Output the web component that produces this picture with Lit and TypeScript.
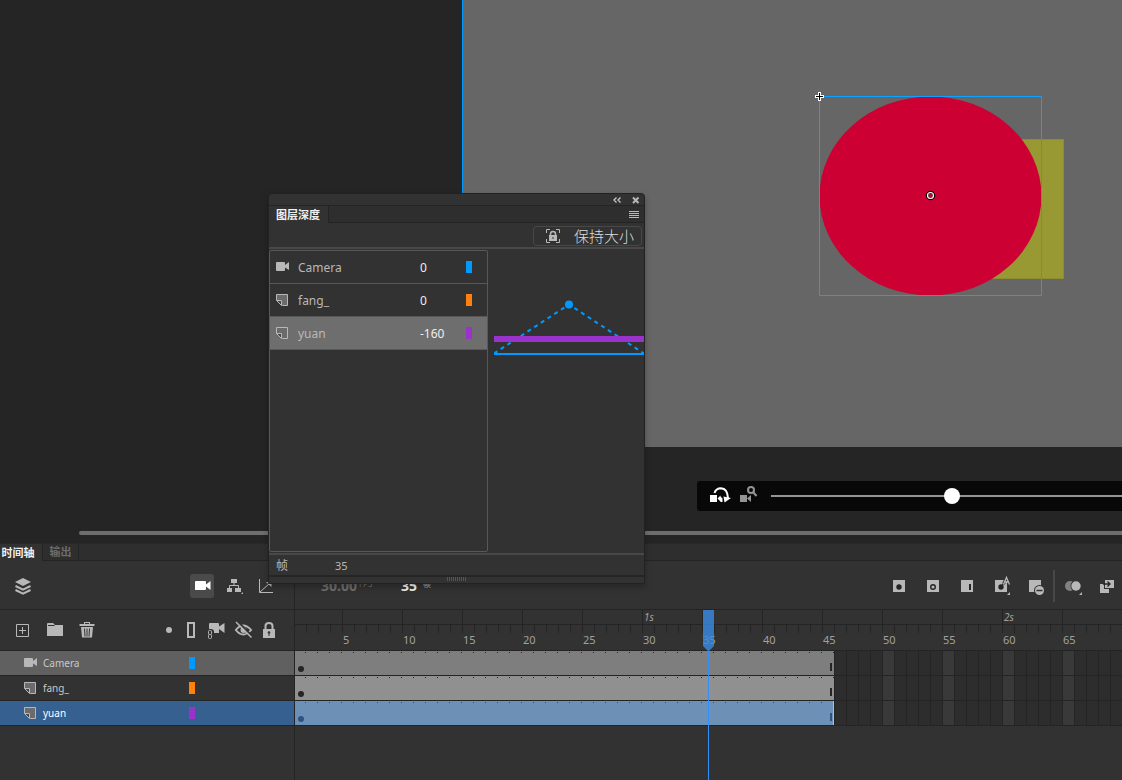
import { LitElement, html, css, svg, nothing } from "lit";
import { customElement, property, state } from "lit/decorators.js";

interface Layer {
  name: string;
  kind: "camera" | "layer";
  depth: number;
  color: string;
  tone: "cam" | "plain" | "active";
}

const LAYERS: Layer[] = [
  { name: "Camera", kind: "camera", depth: 0, color: "#0099ff", tone: "cam" },
  { name: "fang_", kind: "layer", depth: 0, color: "#ff800d", tone: "plain" },
  { name: "yuan", kind: "layer", depth: -160, color: "#9933cc", tone: "active" },
];

const G = "#b8b8b8";

const glyphs: Record<string, unknown> = {
  layers: svg`<path fill=${G} d="M12 4l8 4-8 4-8-4z"/>
    <path fill="none" stroke=${G} stroke-width="2" d="M4.500 12l7.500 3.700 7.500-3.700M4.500 16l7.500 3.700 7.500-3.700"/>`,
  camera: svg`<path fill="#fff" d="M6 7h9q1 0 1 1v2.500l4.500-3.500v9l-4.500-3.500v2.500q0 1-1 1H5.500q-.5 0-.5-.5V8q0-1 1-1z"/>`,
  tree: svg`<path fill=${G} d="M9 5h6v4H9zM5 14h5v4H5zM13 14h6v4h-6zM21 18v2h-2z"/>
    <path fill="none" stroke=${G} d="M12 9v3M7.500 14v-2.500h9V14"/>`,
  graph: svg`<path fill="none" stroke=${G} d="M5.500 5v13.500H19M6 18l9.500-8.500"/>
    <path fill=${G} d="M12 8h5.500v5z"/>`,
  add: svg`<path fill="none" stroke=${G} d="M5.500 6.500h12v12h-12zM11.500 9v7M8 12.500h7"/>`,
  folder: svg`<path fill=${G} d="M4 6q0-1 1-1h5l2 2h8v11H4z"/><path stroke="#323232" stroke-width="1" d="M5 7.500h6.500"/>`,
  trash: svg`<path fill=${G} d="M9 4h6v2h4.500v2h-15V6H9zM6 9h12l-1 10.500H7z"/>
    <path stroke="#323232" d="M9.500 10.500l.5 8M12 10.500v8M14.500 10.500l-.5 8M10 5.500h4"/>`,
  dot: svg`<circle cx="12" cy="12" r="3" fill=${G}/>`,
  outline: svg`<path fill="none" stroke=${G} stroke-width="2" d="M6 5h6v14H6z"/>`,
  camlink: svg`<path fill=${G} d="M2 6q0-1 1-1h8q1 0 1 1v2.500L17.500 5v10L12 11v4H7v-2H2z"/>
    <g fill="none" stroke="#323232" stroke-width="3"><rect x="1.500" y="12.500" width="4" height="8" rx="1.500"/></g>
    <g fill="none" stroke=${G}><rect x="1.500" y="12.500" width="3" height="4" rx="1"/><rect x="1.500" y="16.500" width="3" height="4" rx="1"/></g>`,
  eye: svg`<path fill="none" stroke=${G} stroke-width="1.800" d="M3.800 12Q11 3 19.200 12Q11 21 3.800 12z"/>
    <circle cx="11.500" cy="12" r="3" fill=${G}/><path stroke="#323232" stroke-width="2" d="M5.500 3.500L20 18"/>
    <path stroke=${G} stroke-width="1.500" d="M4 4l15.500 15.500"/>`,
  lock: svg`<path fill="none" stroke=${G} stroke-width="2" d="M8.500 11V8q0-3 3.500-3t3.500 3v3"/>
    <path fill=${G} d="M6 11h12v9H6z"/><circle cx="12" cy="14.500" r="1.300" fill="#323232"/><path stroke="#323232" d="M12 15v3"/>`,
  key: svg`<path fill=${G} d="M6 6h12v12H6z"/><circle cx="12" cy="13" r="2.700" fill="#252525"/>`,
  blank: svg`<path fill=${G} d="M6 6h12v12H6z"/><circle cx="12" cy="13" r="2.300" fill="none" stroke="#252525" stroke-width="1.400"/>`,
  frame: svg`<path fill=${G} d="M6 6h12v12H6z"/><path fill="#252525" d="M14 10h2v6h-2z"/>`,
  auto: svg`<path fill=${G} d="M6 6h12v12H6z"/><circle cx="12" cy="13" r="2.700" fill="#252525"/>
    <path stroke="#252525" stroke-width="1.300" d="M12 13l4-5"/>
    <path fill="none" stroke="#323232" stroke-width="3" d="M14.500 10l3-6 3 6"/>
    <path fill="none" stroke=${G} stroke-width="1.300" d="M14.500 10.500l3-7 3 7M15.500 8h4"/><path fill=${G} d="M21 18v3h-3z"/>`,
  remove: svg`<path fill=${G} d="M6 6h12v12H6z"/><circle cx="16.500" cy="16.500" r="5.500" fill="#323232"/>
    <circle cx="16.500" cy="16.500" r="4.500" fill=${G}/><path stroke="#323232" stroke-width="1.500" d="M13.500 16.500h6"/>`,
  onion: svg`<circle cx="9" cy="12" r="5" fill="#828282"/><circle cx="15" cy="12" r="5.500" fill="#323232"/>
    <circle cx="15" cy="12" r="4.700" fill=${G}/><path fill=${G} d="M21 18v3h-3z"/>`,
  merge: svg`<path fill=${G} d="M5 10h9v9H5z"/><path fill="#323232" d="M9 5h11v10H9z"/><path fill=${G} d="M10 6h9v8h-9z"/>
    <path fill="none" stroke="#252525" stroke-width="1.300" d="M8 10h7M12.500 7.500L15 10l-2.500 2.500"/>`,
  orbit: svg`<path fill="#fff" d="M1 11h7v7H1zM8.500 14.500l3-3v6zM11.500 12.500l2 2v3.500h-2z"/>
    <path fill="none" stroke="#fff" stroke-width="2" d="M5.500 9Q7 4.200 12 4.200Q18.500 4.500 19 14"/><path fill="#fff" d="M14.500 12.500l7.500 1.500-6.500 4.500z"/>`,
  zoomcam: svg`<path fill="#949494" d="M1 11h7v7H1zM8 14.500l4-3.500v7z"/>
    <circle cx="12" cy="6" r="3" fill="none" stroke="#949494" stroke-width="2"/><path stroke="#949494" stroke-width="2" d="M14 8l3.500 4"/>`,
  hold: svg`<path fill="none" stroke=${G} d="M5.500 9V5.500H9M15 5.500h3.500V9M18.500 15v3.500H15M9 18.500H5.500V15"/>
    <path fill="none" stroke=${G} stroke-width="1.500" d="M9.500 12v-2q0-2.500 2.500-2.500t2.500 2.500v2"/>
    <path fill=${G} d="M8 11h8v6H8z"/><path stroke="#323232" d="M12 13v2"/>`,
  smallcam: svg`<path fill=${G} d="M1 1h7q1 0 1 1v2l4-3v8L9 6.500V9q0 1-1 1H1q-1 0-1-1V2q0-1 1-1z"/>`,
  smalllayer: svg`<path fill="#6b6b6b" d="M.5.5h11v11H6L.5 6z"/><path fill="none" stroke=${G} d="M.5.5h11v11H6.500L.5 6z"/>
    <path fill="#454545" stroke=${G} d="M.5 6.500h5v5z"/>`,
};

const icon = (name: string, w = 24, h = 24) =>
  html`<svg width=${w} height=${h} viewBox="0 0 ${w} ${h}" aria-hidden="true">${glyphs[name]}</svg>`;

const layerIcon = (kind: Layer["kind"]) =>
  kind === "camera" ? icon("smallcam", 13, 12) : icon("smalllayer", 13, 12);

const shared = css`
  :host {
    box-sizing: border-box;
    font-family: "Noto Sans", "Noto Sans CJK SC", sans-serif;
    color: #b8b8b8;
  }
  * {
    box-sizing: border-box;
  }
  button,
  input {
    margin: 0;
    padding: 0;
    border: 0;
    background: none;
    color: inherit;
    font: inherit;
  }
  svg {
    display: block;
    flex: none;
  }
  .icon {
    width: 24px;
    height: 24px;
    border-radius: 3px;
    flex: none;
  }
  .chip {
    display: block;
    width: 6px;
    height: 12px;
  }
`;

@customElement("stage-view")
export class StageView extends LitElement {
  static styles = [
    shared,
    css`
      :host {
        display: flex;
        flex-direction: column;
        min-height: 0;
        overflow: hidden;
        background: #252525;
      }
      .artboard {
        flex: 1;
        min-height: 0;
        margin-left: 462px;
        border-left: 1px solid #0099ff;
        background: #666666;
        overflow: hidden;
      }
      .camera-bar {
        display: flex;
        align-items: center;
        gap: 6px;
        height: 30px;
        margin: 34px 0 20px 697px;
        padding-left: 12px;
        background: #080808;
        border-radius: 3px 0 0 3px;
      }
      .slider {
        appearance: none;
        flex: 1;
        min-width: 0;
        height: 16px;
        margin-left: 2px;
      }
      .slider::-webkit-slider-runnable-track {
        height: 2px;
        background: #949494;
      }
      .slider::-webkit-slider-thumb {
        appearance: none;
        width: 16px;
        height: 16px;
        margin-top: -7px;
        border-radius: 50%;
        background: #ffffff;
      }
      .scroll {
        height: 4px;
        margin: 0 0 8px 79px;
        border-radius: 2px 0 0 2px;
        background: #6e6e6e;
      }
    `,
  ];

  render() {
    return html`
      <div class="artboard">
        <svg width="659" height="447" viewBox="463 0 659 447" role="img" aria-label="yuan, fang_">
          <path fill="#999933" stroke="#8c8c33" d="M924.500 139.500h139v139h-139z" />
          <ellipse cx="930.500" cy="196" rx="111" ry="99.500" fill="#cc0033" />
          <path fill="none" stroke="#0da2ff" d="M819.500 96.500h222v199h-222z" />
          <path stroke="#fff" stroke-width="3" d="M815 96.500h9M819.500 92v9" />
          <path stroke="#000" d="M816 96.500h7M819.500 93v7" />
          <circle cx="930.500" cy="195.500" r="3.500" fill="none" stroke="#000" stroke-width="2.500" />
          <circle cx="930.500" cy="195.500" r="3" fill="none" stroke="#fff" stroke-width="1.200" />
        </svg>
      </div>
      <div class="camera-bar">
        <button class="icon" aria-label="旋转">${icon("orbit")}</button>
        <button class="icon" aria-label="缩放">${icon("zoomcam")}</button>
        <input class="slider" type="range" min="0" max="1000" value="516" aria-label="旋转" />
      </div>
      <div class="scroll"></div>
    `;
  }
}

@customElement("depth-panel")
export class DepthPanel extends LitElement {
  @property({ attribute: false }) layers: Layer[] = [];

  static styles = [
    shared,
    css`
      :host {
        display: flex;
        flex-direction: column;
        background: #323232;
        border: 1px solid #222222;
        border-radius: 4px 4px 0 0;
        box-shadow: 0 3px 6px rgba(0, 0, 0, 0.25);
        font-size: 12px;
      }
      .title {
        display: flex;
        justify-content: flex-end;
        align-items: center;
        gap: 8px;
        height: 12px;
        padding-right: 3px;
        border-bottom: 1px solid #242424;
      }
      .tiny {
        width: 11px;
        height: 11px;
      }
      .tabs {
        display: flex;
        justify-content: space-between;
        height: 17px;
      }
      .tab {
        padding: 0 8px 0 7px;
        border-right: 1px solid #242424;
        color: #f0f0f0;
        font-weight: 700;
        font-size: 11px;
        line-height: 16px;
      }
      .rest {
        display: flex;
        flex: 1;
        justify-content: flex-end;
        align-items: center;
        padding-right: 4px;
        background: #2e2e2e;
        border-bottom: 1px solid #242424;
      }
      .tools {
        display: flex;
        justify-content: flex-end;
        height: 26px;
        padding: 3px 2px;
        border-bottom: 2px solid #484848;
      }
      .hold {
        display: flex;
        align-items: center;
        gap: 9px;
        height: 20px;
        padding: 0 7px;
        border: 1px solid #484848;
        border-radius: 4px;
        color: #dddddd;
        font-size: 15px;
        line-height: 18px;
        font-weight: 300;
        white-space: nowrap;
      }
      .main {
        display: grid;
        grid-template-columns: 219px 1fr;
        flex: 1;
        min-height: 0;
        padding-top: 1px;
      }
      .list {
        margin: 0 0 1px;
        padding: 0;
        list-style: none;
        border: 1px solid #585858;
        border-radius: 2px;
      }
      .row {
        display: grid;
        grid-template-columns: 22px 122px 46px 6px;
        align-items: center;
        height: 33px;
        padding-left: 6px;
        border-bottom: 1px solid #585858;
      }
      .row.active {
        background: #6e6e6e;
      }
      .depth {
        width: 40px;
        color: #eeeeee;
      }
      .view {
        padding: 50px 0 0 6px;
      }
      .status {
        display: flex;
        gap: 47px;
        align-items: center;
        height: 24px;
        padding-left: 7px;
        border-top: 2px solid #484848;
        border-bottom: 2px solid #252525;
      }
      .num {
        font-size: 11px;
      }
      .grip {
        height: 4px;
        width: 20px;
        margin: 0 auto 2px;
        background: repeating-linear-gradient(90deg, #545454 0 1px, transparent 1px 2px);
      }
    `,
  ];

  render() {
    return html`
      <div class="title">
        <button class="tiny" aria-label="折叠">
          <svg width="11" height="11" fill="none" stroke="#c8c8c8" stroke-width="1.300">
            <path d="M5.500 3.500L3 6l2.500 2.500M9.500 3.500L7 6l2.500 2.500" />
          </svg>
        </button>
        <button class="tiny" aria-label="关闭">
          <svg width="11" height="11" stroke="#b8b8b8" stroke-width="2"><path d="M3 3.500l5.500 5.500M8.500 3.500L3 9" /></svg>
        </button>
      </div>
      <div class="tabs">
        <button class="tab">图层深度</button>
        <div class="rest">
          <button class="tiny" aria-label="菜单">
            <svg width="11" height="11" stroke="#b8b8b8"><path d="M0 2.500h10M0 4.500h10M0 6.500h10M0 8.500h10" /></svg>
          </button>
        </div>
      </div>
      <div class="tools"><button class="hold">${icon("hold")}<span>保持大小</span></button></div>
      <div class="main">
        <ul class="list">
          ${this.layers.map(
            (l) => html`<li class="row ${l.tone === "active" ? "active" : ""}">
              ${layerIcon(l.kind)}
              <label for="depth-${l.name}">${l.name}</label>
              <input class="depth" id="depth-${l.name}" .value=${String(l.depth)} />
              <span class="chip" style="background:${l.color}"></span>
            </li>`,
          )}
        </ul>
        <div class="view">
          <svg width="150" height="60" viewBox="0 0 150 60" role="img" aria-label="深度">
            <path fill="none" stroke="#0099ff" stroke-width="2" stroke-dasharray="4 4" d="M0 53.500L75 4.500L150 53.500" />
            <circle cx="75" cy="4.500" r="4" fill="#0099ff" />
            <path fill="#9933cc" d="M0 36h150v6H0z" />
            <path fill="#0099ff" d="M0 53h150v2H0z" />
          </svg>
        </div>
      </div>
      <div class="status"><span>帧</span><span class="num">35</span></div>
      <div class="grip"></div>
    `;
  }
}

@customElement("timeline-panel")
export class TimelinePanel extends LitElement {
  @property({ attribute: false }) layers: Layer[] = [];
  @state() private markCount = 0;

  private measure = () => {
    // 295px of layer names, then 47px before the first five-frame mark
    this.markCount = Math.max(0, Math.floor((window.innerWidth - 342) / 60));
  };

  connectedCallback() {
    super.connectedCallback();
    this.measure();
    window.addEventListener("resize", this.measure);
  }

  disconnectedCallback() {
    window.removeEventListener("resize", this.measure);
    super.disconnectedCallback();
  }

  static styles = [
    shared,
    css`
      :host {
        display: flex;
        flex-direction: column;
        background: #323232;
        border-top: 1px solid #282828;
        font-size: 10px;
      }
      .tabs {
        display: flex;
        height: 17px;
        background: #2e2e2e;
      }
      .tab {
        width: 43px;
        border-right: 1px solid #242424;
        background: #323232;
        color: #f0f0f0;
        font-size: 11px;
        font-weight: 700;
        line-height: 16px;
        padding-right: 6px;
        white-space: nowrap;
      }
      .tab.off {
        width: 36px;
        padding: 0;
        background: #2e2e2e;
        color: #6c6c6c;
        border-bottom: 1px solid #242424;
      }
      .fill {
        flex: 1;
        border-bottom: 1px solid #242424;
      }
      .body {
        display: grid;
        grid-template-columns: 295px 1fr;
        flex: 1;
        min-height: 0;
      }
      .left {
        border-right: 1px solid #242424;
      }
      .right {
        position: relative;
        min-width: 0;
        overflow: hidden;
      }
      .bar {
        display: flex;
        height: 49px;
        padding: 13px 16px 0 11px;
        gap: 8px;
        border-bottom: 1px solid #242424;
      }
      .space {
        flex: 1;
      }
      .pressed {
        background: #4a4a4a;
      }
      .layer-tools {
        display: flex;
        align-items: center;
        height: 41px;
        padding: 0 13px 0 11px;
        border-bottom: 1px solid #242424;
      }
      .edit,
      .flags {
        display: flex;
        gap: 8px;
      }
      .flags {
        gap: 1px;
      }
      .names,
      .tracks {
        margin: 0;
        padding: 0;
        list-style: none;
      }
      .name {
        display: grid;
        grid-template-columns: 19px 146px 6px;
        align-items: center;
        height: 25px;
        padding-left: 24px;
        border-bottom: 1px solid #242424;
        color: #c8c8c8;
      }
      .name.cam {
        background: #606060;
      }
      .name.active {
        background: #356090;
        color: #ffffff;
      }
      .frames-bar {
        display: flex;
        height: 49px;
        padding: 13px 3px 0 26px;
        gap: 10px;
        border-bottom: 1px solid #242424;
      }
      .rate,
      .now {
        display: flex;
        align-items: flex-start;
        font-size: 14px;
        font-weight: 700;
        line-height: 24px;
        color: #f0f0f0;
        white-space: nowrap;
      }
      .rate {
        width: 70px;
        color: #6e6e6e;
      }
      .unit {
        margin-left: 2px;
        font-size: 8px;
        font-weight: 400;
        line-height: 20px;
      }
      .now .unit {
        margin-left: 6px;
        color: #b8b8b8;
      }
      .group {
        display: flex;
        gap: 10px;
      }
      .end {
        display: flex;
        gap: 6px;
      }
      .sep {
        width: 2px;
        height: 32px;
        margin-top: -4px;
        background: #484848;
      }
      .ruler {
        display: flex;
        height: 41px;
        padding-left: 47px;
        overflow: hidden;
        border-bottom: 1px solid #242424;
        color: #a0a0a0;
        background:
          linear-gradient(90deg, transparent 11px, #242424 11px) 0 15px / 12px 8px repeat-x,
          linear-gradient(#242424, #242424) 0 14px / 100% 1px no-repeat;
      }
      .mark {
        flex: none;
        width: 60px;
      }
      .second {
        height: 14px;
        padding-left: 1px;
        border-left: 1px solid #242424;
        font-style: italic;
        line-height: 14px;
      }
      .count {
        padding: 8px 0 0 1px;
        font-size: 11px;
        line-height: 16px;
      }
      .track {
        display: flex;
        height: 25px;
        border-bottom: 1px solid #242424;
        background:
          linear-gradient(90deg, transparent 11px, #242424 11px) 0 0 / 12px 24px repeat-x,
          linear-gradient(90deg, #393939 11px, transparent 11px) 48px 0 / 60px 24px repeat-x,
          #2d2d2d;
      }
      .span {
        display: flex;
        flex: none;
        justify-content: space-between;
        align-items: flex-end;
        height: 24px;
        padding: 0 2px 4px 3px;
        color: #252525;
        background:
          linear-gradient(90deg, transparent 10px, currentcolor 10px 11px, transparent 11px) 0 1px / 12px 1px repeat-x,
          #909090;
      }
      .cam .span {
        background-color: #7e7e7e;
      }
      .active .span {
        color: #2c5482;
        background-color: #6d90b7;
        border-right: 1px solid #b8d840;
        padding-right: 1px;
      }
      .key {
        width: 6px;
        height: 6px;
        margin-bottom: -1px;
        border-radius: 50%;
        background: currentcolor;
      }
      .stop {
        width: 2px;
        height: 8px;
        background: currentcolor;
      }
      .playhead {
        position: absolute;
        top: 49px;
        bottom: 0;
        width: 11px;
      }
      .flag {
        height: 41px;
        background: rgba(56, 140, 230, 0.8);
        clip-path: polygon(0 0, 100% 0, 100% 36px, 6px 41px, 5px 41px, 0 36px);
      }
      .line {
        width: 1px;
        height: 100%;
        margin-left: 5px;
        background: #3090f8;
      }
    `,
  ];

  render() {
    const frameWidth = 12;
    const marks = Array.from({ length: this.markCount }, (_, i) => (i + 1) * 5);
    const btn = (name: string, label: string, extra = "") =>
      html`<button class="icon ${extra}" aria-label=${label}>${icon(name)}</button>`;
    return html`
      <div class="tabs">
        <button class="tab">时间轴</button>
        <button class="tab off">输出</button>
        <div class="fill"></div>
      </div>
      <div class="body">
        <div class="left">
          <div class="bar">
            ${btn("layers", "图层")}<span class="space"></span>
            ${btn("camera", "摄像头", "pressed")}${btn("tree", "父级")}${btn("graph", "图层深度")}
          </div>
          <div class="layer-tools">
            <div class="edit">${btn("add", "新建图层")}${btn("folder", "新建文件夹")}${btn("trash", "删除")}</div>
            <span class="space"></span>
            <div class="flags">
              ${btn("dot", "突出显示")}${btn("outline", "轮廓")}${btn("camlink", "附加到摄像头")}${btn("eye", "显示")}${btn("lock", "锁定")}
            </div>
          </div>
          <ul class="names">
            ${this.layers.map(
              (l) => html`<li class="name ${l.tone}">
                ${layerIcon(l.kind)}<span>${l.name}</span>
                <span class="chip" style="background:${l.color}"></span>
              </li>`,
            )}
          </ul>
        </div>
        <div class="right">
          <div class="frames-bar">
            <div class="rate">30.00<span class="unit">FPS</span></div>
            <div class="now">35<span class="unit">帧</span></div>
            <span class="space"></span>
            <div class="end">
              <div class="group">
                ${btn("key", "关键帧")}${btn("blank", "空白关键帧")}${btn("frame", "帧")}${btn("auto", "自动关键帧")}${btn("remove", "删除帧")}
              </div>
              <span class="sep"></span>
              <div class="group">${btn("onion", "绘图纸外观")}${btn("merge", "编辑多个帧")}</div>
            </div>
          </div>
          <div class="ruler">
            ${marks.map(
              (n) => html`<div class="mark">
                <div class="second">${n % 30 === 0 ? `${n / 30}s` : nothing}</div>
                <div class="count">${n}</div>
              </div>`,
            )}
          </div>
          <ul class="tracks">
            ${this.layers.map(
              (l) => html`<li class="track ${l.tone}">
                <div class="span" style="width:${45 * frameWidth - 1}px">
                  <span class="key"></span><span class="stop"></span>
                </div>
              </li>`,
            )}
          </ul>
          <div class="playhead" style="left:${34 * frameWidth}px">
            <div class="flag"></div>
            <div class="line"></div>
          </div>
        </div>
      </div>
    `;
  }
}

@customElement("app-root")
export class AppRoot extends LitElement {
  static styles = css`
    :host {
      display: flex;
      flex-direction: column;
      position: relative;
      height: 100vh;
      overflow: hidden;
      background: #252525;
    }
    stage-view {
      flex: 1;
    }
    timeline-panel {
      height: 237px;
      flex: none;
    }
    depth-panel {
      position: absolute;
      left: 268px;
      top: 193px;
      width: 377px;
      height: 391px;
    }
  `;

  render() {
    return html`
      <stage-view></stage-view>
      <timeline-panel .layers=${LAYERS}></timeline-panel>
      <depth-panel .layers=${LAYERS}></depth-panel>
    `;
  }
}
